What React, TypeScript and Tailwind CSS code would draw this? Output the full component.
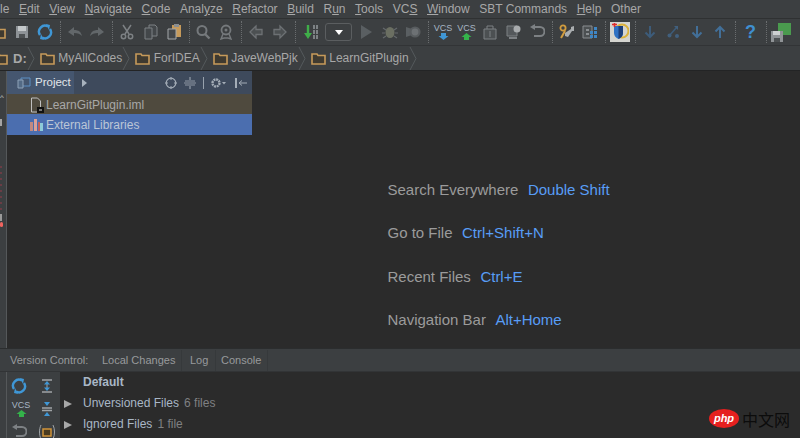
import React from 'react';

const font = 'font-["Liberation_Sans",Arial,sans-serif]';

const Folder = ({ className = '' }: { className?: string }) => (
  <svg width="15" height="13" viewBox="0 0 15 13" className={className}>
    <path d="M1 2h5l1 1.500h7v8.500H1z" fill="#3f3a30" stroke="#c69a5a" strokeWidth="1.600" />
  </svg>
);

const Sep = () => <div className="h-[22px] w-0 shrink-0 border-l border-dotted border-[#6a6d6f]" />;

const Slot = ({ w = 23, children }: { w?: number; children?: React.ReactNode }) => (
  <div className="flex h-full shrink-0 items-center justify-center" style={{ width: w }}>
    {children}
  </div>
);

const Svg = ({ children, w = 16, h = 16 }: { children: React.ReactNode; w?: number; h?: number }) => (
  <svg width={w} height={h} viewBox={`0 0 ${w} ${h}`}>
    {children}
  </svg>
);

const SaveIcon = () => (
  <Svg>
    <path d="M2 2h12v12H2z" fill="#8d9296" />
    <path d="M4 2h8v5H4z" fill="#c4c8ca" />
    <path d="M5 10h6v4H5z" fill="#4c5052" />
  </Svg>
);
const SyncIcon = ({ c = '#3f97d6' }: { c?: string }) => (
  <Svg>
    <path d="M3 11A6 6 0 0 1 11 2.500" fill="none" stroke={c} strokeWidth="2.400" />
    <path d="M13 5A6 6 0 0 1 5 13.500" fill="none" stroke={c} strokeWidth="2.400" />
    <path d="M9 0l4 1-1 5zM7 16l-4-1 1-5z" fill={c} />
  </Svg>
);
const UndoIcon = ({ flip = false }: { flip?: boolean }) => (
  <Svg>
    <g transform={flip ? 'matrix(-1 0 0 1 16 0)' : undefined}>
      <path d="M1 8l6-5v3c5 0 7 2 8 6-2-2-4-3-8-3v3z" fill="#62676a" />
    </g>
  </Svg>
);
const CutIcon = () => (
  <Svg>
    <path d="M4 1l6 9M12 1L6 10" stroke="#7d8184" strokeWidth="1.500" fill="none" />
    <circle cx="4.500" cy="12.500" r="2.200" fill="none" stroke="#7d8184" strokeWidth="1.500" />
    <circle cx="11.500" cy="12.500" r="2.200" fill="none" stroke="#7d8184" strokeWidth="1.500" />
  </Svg>
);
const CopyIcon = () => (
  <Svg>
    <path d="M6 1h6l2 2v9H6z" fill="#43474a" stroke="#7d8184" />
    <path d="M2 4h7v11H2z" fill="#43474a" stroke="#7d8184" />
  </Svg>
);
const PasteIcon = () => (
  <Svg>
    <path d="M5 1h9v12H5z" fill="#c69a5a" />
    <path d="M7 0h5v3H7z" fill="#8a8e91" />
    <path d="M1 5h8v10H1z" fill="#43474a" stroke="#a4a8aa" />
  </Svg>
);
const FindIcon = () => (
  <Svg>
    <circle cx="7" cy="6.500" r="4.500" fill="none" stroke="#75797c" strokeWidth="2" />
    <path d="M10 10l4.500 4.500" stroke="#75797c" strokeWidth="2.400" />
  </Svg>
);
const ReplaceIcon = () => (
  <Svg>
    <circle cx="8" cy="6" r="4.500" fill="none" stroke="#75797c" strokeWidth="1.800" />
    <circle cx="8" cy="6" r="1.500" fill="#75797c" />
    <path d="M5 10l-2 5 3-1M11 10l2 5-3-1M6 14h4" stroke="#75797c" strokeWidth="1.400" fill="none" />
  </Svg>
);
const ArrowIcon = ({ flip = false }: { flip?: boolean }) => (
  <Svg>
    <g transform={flip ? 'matrix(-1 0 0 1 16 0)' : undefined}>
      <path d="M2 8l6-6v3.500h6v5H8V14z" fill="#4c5052" stroke="#6d7174" strokeWidth="1.300" />
    </g>
  </Svg>
);
const BuildIcon = () => (
  <Svg>
    <path d="M5 1v10" stroke="#3fae49" strokeWidth="2.400" />
    <path d="M1 9h8l-4 6z" fill="#3fae49" />
    <path d="M10 1h2v4h-2zM13 1h2v4h-2zM10 6h2v4h-2zM13 6h2v4h-2zM10 11h2v4h-2zM13 11h2v4h-2z" fill="#7d8285" />
  </Svg>
);
const RunIcon = () => (
  <Svg>
    <path d="M3 1l11 7-11 7z" fill="#5a5f62" />
  </Svg>
);
const DebugIcon = () => (
  <Svg>
    <ellipse cx="8" cy="8.500" rx="4.500" ry="5.500" fill="#6b6f62" />
    <path d="M1 4l3 2M15 4l-3 2M0 9h3M13 9h3M1 14l3-2M15 14l-3-2" stroke="#65696c" strokeWidth="1.200" />
  </Svg>
);
const CoverageIcon = () => (
  <Svg>
    <path d="M1 3l6 2V11l-6 2z" fill="#5a5f62" />
    <circle cx="10" cy="8" r="5.600" fill="#585c5f" />
    <circle cx="10" cy="8" r="3.400" fill="#6d7174" />
  </Svg>
);
const VcsIcon = ({ color, up }: { color: string; up: boolean }) => (
  <div className="flex w-[20px] flex-col items-center leading-none">
    <span className="text-[9px] leading-[9px] text-[#a9b7c6]">VCS</span>
    <svg width="11" height="7" viewBox="0 0 11 7">
      <path d={up ? 'M5.500 0l5 4H8v3H3V4H.5z' : 'M3 0h5v3h2.500l-5 4-5-4H3z'} fill={color} />
    </svg>
  </div>
);
const ShelfIcon = () => (
  <Svg>
    <path d="M2 5h12v10H2z" fill="#4c5052" stroke="#7d8184" />
    <path d="M5 5V2h6v3M8 7v6" stroke="#7d8184" fill="none" />
  </Svg>
);
const HistoryIcon = () => (
  <Svg>
    <path d="M1 2h10v10H1z" fill="#54585b" stroke="#7d8184" />
    <circle cx="11" cy="5" r="3.500" fill="#a8abad" />
    <path d="M3 14h8" stroke="#7d8184" strokeWidth="2" />
  </Svg>
);
const RevertIcon = () => (
  <Svg>
    <path d="M5 3H11a4 4 0 0 1 0 9H5" fill="none" stroke="#7d8184" strokeWidth="2" />
    <path d="M6 0v6L1 3z" fill="#7d8184" />
  </Svg>
);
const WrenchIcon = () => (
  <Svg>
    <circle cx="4" cy="4" r="2.600" fill="none" stroke="#d09c3f" strokeWidth="1.800" />
    <path d="M6 7l-4 7" stroke="#d09c3f" strokeWidth="2" />
    <path d="M15 2l-3 1v2l-6 4v3l3 1 4-6h2z" fill="#a9adaf" />
  </Svg>
);
const SdkIcon = () => (
  <Svg>
    <path d="M1 2h9v12H1z" fill="#4c5052" stroke="#8a8e91" />
    <path d="M4 5h3v2H4zM4 9h3v2H4z" fill="#8a8e91" />
    <path d="M8 7h3v3H8zM12 7h3v3h-3zM8 11h3v3H8zM12 11h3v3h-3zM12 3h3v3h-3z" fill="#3f86c4" />
  </Svg>
);
const ShieldIcon = () => (
  <div className="flex h-[20px] w-[20px] items-center justify-center bg-[#d5d5d0]">
    <Svg w={18} h={18}>
      <circle cx="11" cy="8" r="6.500" fill="none" stroke="#dcb23b" strokeWidth="2" />
      <path d="M3 3h9v7c0 3-2 5-4.500 6C5 15 3 13 3 10z" fill="#2f72c4" />
      <path d="M7.500 3H12v7c0 3-2 5-4.500 6z" fill="#1d3f7a" />
      <path d="M1 1.500h5M3.500 0v4" stroke="#e02b2b" strokeWidth="1.600" />
    </Svg>
  </div>
);
const DownIcon = ({ up = false, dim = false }: { up?: boolean; dim?: boolean }) => (
  <Svg>
    <g transform={up ? 'matrix(1 0 0 -1 0 16)' : undefined} stroke={dim ? '#3d5c7a' : '#426f98'} strokeWidth="2" fill="none">
      <path d="M8 2v11M3.500 8.500L8 13l4.500-4.500" />
    </g>
  </Svg>
);
const BranchIcon = () => (
  <Svg>
    <path d="M3 12L11 3" stroke="#3d5c7a" strokeWidth="1.500" />
    <circle cx="3.500" cy="11.500" r="2" fill="#41607e" />
    <circle cx="11" cy="12" r="2" fill="#41607e" />
    <path d="M8 2h4v4z" fill="#41607e" />
  </Svg>
);
const DbIcon = () => (
  <Svg w={20} h={19}>
    <path d="M7 0h13v12H7z" fill="#4a9a4e" />
    <path d="M0 8h12v11H0z" fill="#8f9396" />
    <path d="M2 8h7v4H2z" fill="#cdd0d1" />
    <path d="M3 15h6v4H3z" fill="#4c5052" />
  </Svg>
);

const menu: [string, string, string][] = [
  ['', 'le', ''],
  ['', 'E', 'dit'],
  ['', 'V', 'iew'],
  ['', 'N', 'avigate'],
  ['', 'C', 'ode'],
  ['Anal', 'y', 'ze'],
  ['', 'R', 'efactor'],
  ['', 'B', 'uild'],
  ['R', 'u', 'n'],
  ['', 'T', 'ools'],
  ['VC', 'S', ''],
  ['', 'W', 'indow'],
  ['SBT Commands', '', ''],
  ['', 'H', 'elp'],
  ['Other', '', ''],
];

const crumbs = ['MyAllCodes', 'ForIDEA', 'JaveWebPjk', 'LearnGitPlugin'];

const Chevron = () => (
  <svg width="9" height="23" viewBox="0 0 9 23" className="shrink-0">
    <path d="M1 0l6 11.500L1 23" fill="none" stroke="#555a5c" />
  </svg>
);

const shortcuts = [
  ['Search Everywhere', 'Double Shift'],
  ['Go to File', 'Ctrl+Shift+N'],
  ['Recent Files', 'Ctrl+E'],
  ['Navigation Bar', 'Alt+Home'],
];

export default function App() {
  return (
    <div className={`relative flex h-[438px] w-[800px] flex-col overflow-hidden bg-[#3c3f41] text-[12px] text-[#a8a8a8] ${font}`}>
      {/* menu */}
      <div className="flex h-[19px] shrink-0 items-center gap-[9.600px] border-b border-[#2f3132] text-[12px] leading-none">
        {menu.map(([a, u, b], i) => (
          <span key={i} className="whitespace-pre">
            {a}
            {u && i > 0 ? <span className="underline underline-offset-1">{u}</span> : u}
            {b}
          </span>
        ))}
      </div>

      {/* toolbar */}
      <div className="flex h-[27px] shrink-0 items-center border-b border-[#323436]">
        <div className="w-[10px] shrink-0 overflow-hidden">
          <Folder className="-ml-[9px]" />
        </div>
        <Slot w={24}><SaveIcon /></Slot>
        <Slot w={22}><SyncIcon /></Slot>
        <Slot w={8}><Sep /></Slot>
        <Slot w={22}><UndoIcon /></Slot>
        <Slot w={22}><UndoIcon flip /></Slot>
        <Slot w={8}><Sep /></Slot>
        <Slot w={22}><CutIcon /></Slot>
        <Slot w={25}><CopyIcon /></Slot>
        <Slot w={24}><PasteIcon /></Slot>
        <Slot w={4}><Sep /></Slot>
        <Slot w={24}><FindIcon /></Slot>
        <Slot w={22}><ReplaceIcon /></Slot>
        <Slot w={8}><Sep /></Slot>
        <Slot w={22}><ArrowIcon /></Slot>
        <Slot w={25}><ArrowIcon flip /></Slot>
        <Slot w={6}><Sep /></Slot>
        <Slot w={26}><BuildIcon /></Slot>
        <div className="ml-[1px] flex h-[18px] w-[27px] shrink-0 items-center justify-center rounded-[3px] border border-[#5b5e60] bg-[#3c3f41]">
          <div className="h-0 w-0 border-x-[4px] border-t-[5px] border-x-transparent border-t-white" />
        </div>
        <Slot w={27}><RunIcon /></Slot>
        <Slot w={22}><DebugIcon /></Slot>
        <Slot w={24}><CoverageIcon /></Slot>
        <Slot w={6}><Sep /></Slot>
        <Slot w={24}><VcsIcon color="#3f97d6" up={false} /></Slot>
        <Slot w={23}><VcsIcon color="#34b24a" up /></Slot>
        <Slot w={24}><ShelfIcon /></Slot>
        <Slot w={24}><HistoryIcon /></Slot>
        <Slot w={22}><RevertIcon /></Slot>
        <Slot w={8}><Sep /></Slot>
        <Slot w={22}><WrenchIcon /></Slot>
        <Slot w={24}><SdkIcon /></Slot>
        <Slot w={6}><Sep /></Slot>
        <Slot w={24}><ShieldIcon /></Slot>
        <Slot w={6}><Sep /></Slot>
        <Slot w={24}><DownIcon dim /></Slot>
        <Slot w={23}><BranchIcon /></Slot>
        <Slot w={23}><DownIcon /></Slot>
        <Slot w={24}><DownIcon up /></Slot>
        <Slot w={6}><Sep /></Slot>
        <Slot w={25}><span className="text-[18px] font-bold text-[#3f8fd0]">?</span></Slot>
        <Slot w={6}><Sep /></Slot>
        <Slot w={23}><DbIcon /></Slot>
      </div>

      {/* breadcrumb */}
      <div className="flex h-[24px] shrink-0 items-center text-[12px] leading-none">
        <div className="w-[8px] shrink-0 overflow-hidden">
          <Folder className="-ml-[7px]" />
        </div>
        <span className="ml-[5px] text-[13px] font-bold">D:</span>
        <Chevron />
        {crumbs.map((c) => (
          <React.Fragment key={c}>
            <Folder className="ml-[4px] mr-[3.500px] shrink-0" />
            <span>{c}</span>
            <Chevron />
          </React.Fragment>
        ))}
      </div>

      {/* main */}
      <div className="flex min-h-0 flex-1 border-t border-[#232425]">
        <div className="relative w-[7px] shrink-0 border-r border-[#55585a]">
          <div className="absolute left-0 top-[23px] text-[8px] leading-none text-[#c8c8c8]">^</div>
          <div className="absolute left-0 top-[48px] h-[7px] w-[2px] bg-[#a4a4a4]" />
          <div className="absolute left-0 top-[95px] h-[50px] w-[2px] bg-[repeating-linear-gradient(#6a3d45_0_2px,transparent_2px_6px)]" />
          <div className="absolute left-0 top-[143px] h-[7px] w-[2px] bg-[#9a9a9a]" />
          <div className="absolute left-0 top-[151px] h-[5px] w-[3px] rounded-full bg-[#f0645f]" />
        </div>

        <div className="flex w-[245px] shrink-0 flex-col bg-[#2b2b2b]">
          <div className="flex h-[23px] shrink-0 items-center bg-[#3e4a5c] text-white">
            <div className="flex h-full w-[67px] shrink-0 items-center gap-[4px] bg-[#45566f] pl-[10px]">
              <svg width="14" height="12" viewBox="0 0 14 12" className="shrink-0">
                <path d="M4 1h9v8H4z" fill="none" stroke="#5d8fc4" />
                <path d="M1 3h5v8H1z" fill="#536a85" stroke="#8fa2b8" />
              </svg>
              <span className="text-[11.500px] text-[#e2e6ea]">Project</span>
            </div>
            <div className="ml-[8px] h-0 w-0 border-y-[4px] border-l-[5px] border-y-transparent border-l-[#a8b2bd]" />
            <div className="ml-auto flex items-center gap-[7px] pr-[5px] text-[#a4adb7]">
              <svg width="12" height="12" viewBox="0 0 12 12">
                <circle cx="6" cy="6" r="4.800" fill="none" stroke="#a4adb7" strokeWidth="1.200" />
                <path d="M6 0v3M6 9v3M0 6h3M9 6h3" stroke="#a4adb7" />
              </svg>
              <svg width="12" height="12" viewBox="0 0 12 12">
                <path d="M0 6h12M1 4h10M1 8h10" stroke="#a4adb7" strokeWidth="0.800" />
                <path d="M6 0v3M6 9v3" stroke="#a4adb7" />
              </svg>
              <div className="h-[12px] w-px bg-[#98a2ad]" />
              <svg width="15" height="12" viewBox="0 0 15 12">
                <circle cx="5" cy="6" r="3.500" fill="none" stroke="#a4adb7" strokeWidth="2.400" strokeDasharray="2 0.700" />
                <path d="M11 5h4l-2 2.500z" fill="#a4adb7" />
              </svg>
              <svg width="12" height="12" viewBox="0 0 12 12" className="ml-[2px]">
                <path d="M1 1v10" stroke="#a4adb7" strokeWidth="2" />
                <path d="M4 6h8M4 6l3-2.500M4 6l3 2.500" stroke="#a4adb7" fill="none" />
              </svg>
            </div>
          </div>
          <div className="flex h-[20px] shrink-0 items-center bg-[#4f4a3e] pl-[23px] pt-[1px] text-[12px]">
            <svg width="14" height="16" viewBox="0 0 14 16" className="mr-[2px] shrink-0">
              <path d="M1.500 1h6l3 3v11h-9z" fill="none" stroke="#bfbfbf" />
              <path d="M7 10h7v6H7z" fill="#111" />
              <path d="M9 13h3" stroke="#ddd" />
            </svg>
            <span>LearnGitPlugin.iml</span>
          </div>
          <div className="flex h-[21px] shrink-0 items-center bg-[#4b6eaf] pl-[22px] pt-[1px] text-[12px] text-[#bcc6d6]">
            <svg width="14" height="14" viewBox="0 0 14 14" className="mr-[3px] shrink-0">
              <path d="M1 4h3v9H1z" fill="#c28a80" />
              <path d="M5 1h3v12H5z" fill="#d9a39a" />
              <path d="M9 4h2v9H9z" fill="#c25f5a" />
              <path d="M11 5h3v8h-3z" fill="#8ecbd8" />
            </svg>
            <span>External Libraries</span>
          </div>
        </div>

        <div className="flex flex-1 flex-col gap-[21.300px] bg-[#2b2b2b] pl-[135.500px] pt-[108px] text-[15px] leading-[22px]">
          {shortcuts.map(([label, keys]) => (
            <div key={label} className="flex gap-[9.500px]">
              <span className="text-[#9b9b9b]">{label}</span>
              <span className="text-[#589df6]">{keys}</span>
            </div>
          ))}
        </div>
      </div>

      {/* version control */}
      <div className="flex h-[90px] shrink-0 flex-col border-t border-[#2b2d2e]">
        <div className="flex h-[23px] shrink-0 items-center whitespace-nowrap border-b border-[#323436] pl-[10px] pt-[1px] text-[11px] leading-none text-[#989a9c]">
          <span className="w-[92px]">Version Control:</span>
          <span className="w-[79px]">Local Changes</span>
          <span className="flex h-full w-[35px] items-center border-x border-[#36393b] pl-[8px]">Log</span>
          <span className="flex h-full w-[52px] items-center border-r border-[#36393b] pl-[5px]">Console</span>
        </div>
        <div className="flex min-h-0 flex-1">
          <div className="w-[7px] shrink-0 border-r border-[#55585a]" />
          <div className="grid w-[53px] shrink-0 grid-cols-2 content-start gap-y-[7px] pl-[4px] pt-[6px]">
            <SyncIcon />
            <svg width="16" height="16" viewBox="0 0 16 16" className="ml-[3px]">
              <path d="M3 2h10M3 14h10" stroke="#a0a4a7" strokeWidth="1.500" />
              <path d="M8 4v8" stroke="#a0a4a7" />
              <path d="M5 6.500L8 3l3 3.500zM5 9.500L8 13l3-3.500z" fill="#3f97d6" />
            </svg>
            <VcsIcon color="#34b24a" up />
            <svg width="16" height="16" viewBox="0 0 16 16" className="ml-[3px]">
              <path d="M3 7h10M3 9.500h10" stroke="#a0a4a7" strokeWidth="1.300" />
              <path d="M5 1l3 4 3-4zM5 15l3-4 3 4z" fill="#3f97d6" />
            </svg>
            <RevertIcon />
            <svg width="18" height="16" viewBox="0 0 18 16" className="ml-[2px]">
              <path d="M3 1C1 5 1 11 3 15M15 1c2 4 2 10 0 14" stroke="#a0a4a7" fill="none" />
              <path d="M5 5h8v7H5z" fill="#4a3b20" stroke="#d0943a" strokeWidth="1.500" />
            </svg>
          </div>
          <div className="flex min-w-0 flex-1 flex-col bg-[#2b2b2b] text-[12px] leading-[21px]">
            <div className="pl-[23px] font-bold text-[#a9b7c6]">Default</div>
            {[
              ['Unversioned Files', '6 files'],
              ['Ignored Files', '1 file'],
            ].map(([name, count]) => (
              <div key={name} className="flex items-center">
                <div className="ml-[4px] mr-[11px] h-0 w-0 border-y-[4.500px] border-l-[8px] border-y-transparent border-l-[#a8a8a8]" />
                <span className="text-[#a9b7c6]">{name}</span>
                <span className="ml-[5px] text-[#7f8082]">{count}</span>
              </div>
            ))}
          </div>
        </div>
      </div>

      {/* watermark */}
      <div className="absolute left-[709px] top-[409px] flex items-center gap-[3px]">
        <div className="flex h-[19px] w-[30px] items-center justify-center rounded-[50%] bg-[#e5201f] text-[11px] font-bold italic leading-none text-white">
          php
        </div>
        <span className='font-["Noto_Sans_CJK_SC",sans-serif] text-[16px] leading-none text-[#0c0c0c]'>中文网</span>
      </div>
    </div>
  );
}
